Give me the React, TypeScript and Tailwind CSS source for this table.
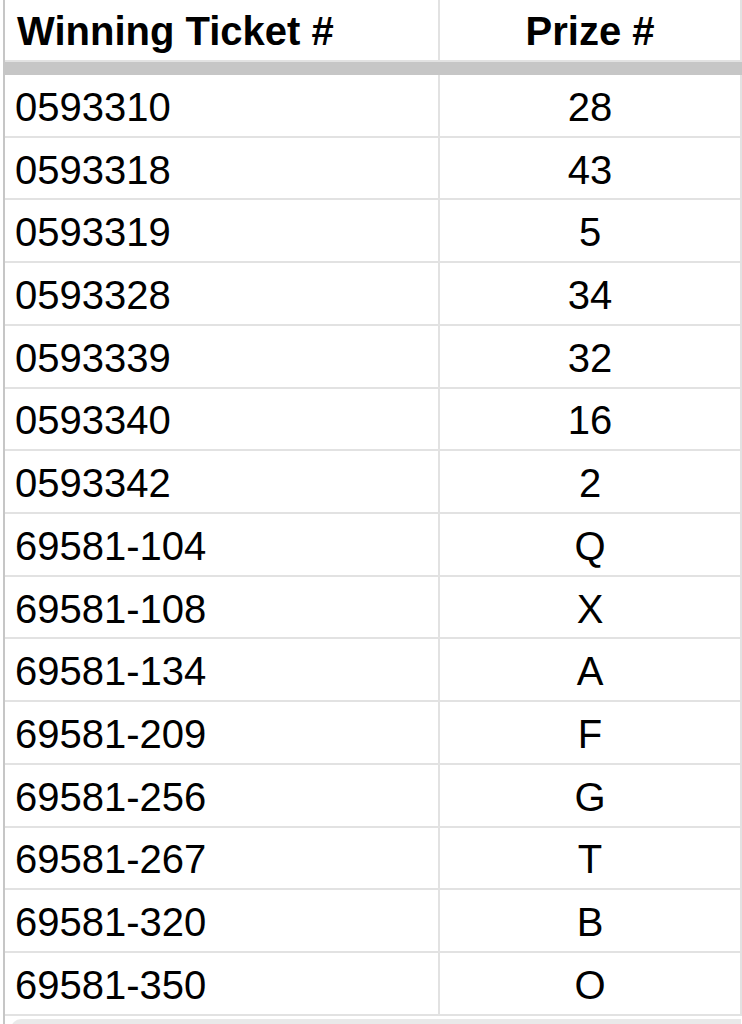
import React from "react";

const rows: [string, string][] = [
  ["0593310", "28"],
  ["0593318", "43"],
  ["0593319", "5"],
  ["0593328", "34"],
  ["0593339", "32"],
  ["0593340", "16"],
  ["0593342", "2"],
  ["69581-104", "Q"],
  ["69581-108", "X"],
  ["69581-134", "A"],
  ["69581-209", "F"],
  ["69581-256", "G"],
  ["69581-267", "T"],
  ["69581-320", "B"],
  ["69581-350", "O"],
];

export default function App() {
  return (
    <div
      className="w-[742px] h-[1024px] bg-white overflow-hidden text-black"
      style={{ fontFamily: '"Liberation Sans", Arial, sans-serif' }}
    >
      <div className="ml-[3px] border-l-2 border-[#c6c6c6] flex flex-col">
        {/* header */}
        <div className="flex h-[62px] border-b-2 border-[#e2e2e2]">
          <div className="w-[435px] border-r-2 border-[#e2e2e2] flex items-center pl-[12px] pt-[1px] text-[40px] font-bold leading-none">
            Winning Ticket #
          </div>
          <div className="w-[302px] border-r-2 border-[#e2e2e2] flex items-center justify-center pt-[1px] text-[40px] font-bold leading-none">
            Prize #
          </div>
        </div>
        <div className="h-[13px] bg-[#c6c6c6] -ml-[2px]" />
        {rows.map(([t, p]) => (
          <div key={t} className="flex h-[62.73px] border-b-2 border-[#e2e2e2]">
            <div className="w-[435px] border-r-2 border-[#e2e2e2] flex items-center pl-[10px] pt-[3px] text-[40px] leading-none">
              {t}
            </div>
            <div className="w-[302px] border-r-2 border-[#e2e2e2] flex items-center justify-center pt-[3px] text-[40px] leading-none">
              {p}
            </div>
          </div>
        ))}
        <div className="h-[3px]" />
        <div className="ml-[6px] w-[730px] h-[20px] bg-[#e9e9e9] rounded-tl-[10px]" />
      </div>
    </div>
  );
}
